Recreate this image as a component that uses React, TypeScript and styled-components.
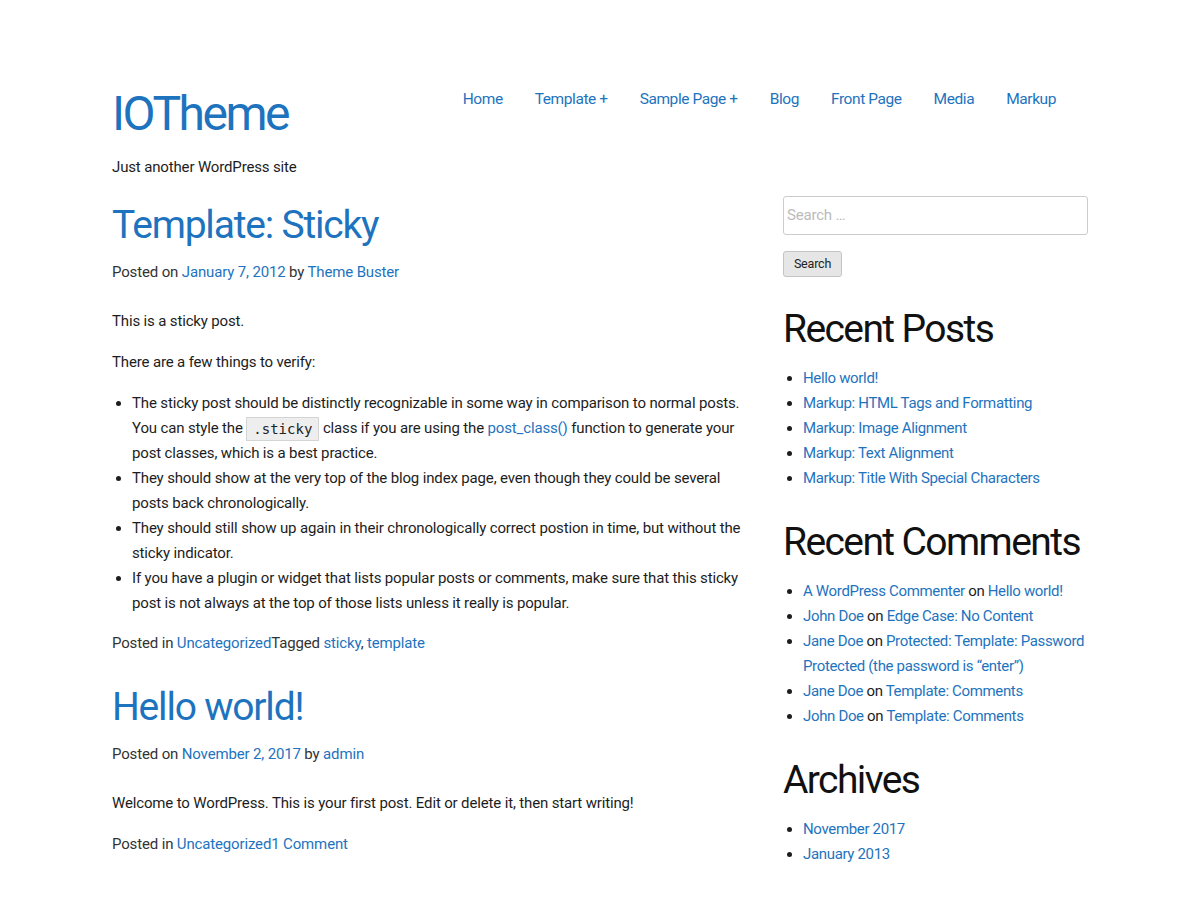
import React from "react";
import styled, { createGlobalStyle } from "styled-components";

const Global = createGlobalStyle`
  html, body { margin: 0; padding: 0; background: #fff; }
  body {
    font-family: Roboto, "Liberation Sans", sans-serif;
    font-size: 15px;
    line-height: 25px;
    letter-spacing: -0.15px;
    color: #1d1d1d;
  }
  a { color: #1e73be; text-decoration: none; }
`;

const Page = styled.div`
  width: 976px;
  margin: 0 auto;
  padding-top: 87px;
`;

const Header = styled.header`
  display: flex;
  justify-content: space-between;
  align-items: flex-start;
`;

const Branding = styled.div`
  display: flex;
  flex-direction: column;
`;

const SiteTitle = styled.a`
  font-size: 48px;
  line-height: 58px;
  letter-spacing: -2.5px;
  margin-top: -2px;
  color: #1e73be;
`;

const Tagline = styled.p`
  margin: 12px 0 0;
  color: #1d1d1d;
`;

const NavList = styled.ul`
  display: flex;
  list-style: none;
  margin: 0;
  padding: 0 16px 0 0;
`;

const NavItem = styled.li`
  padding: 0 16px;
  font-size: 15.5px;
  letter-spacing: -0.42px;
`;

const Content = styled.div`
  display: grid;
  grid-template-columns: 634px 305px;
  column-gap: 37px;
  margin-top: 15.5px;
  align-items: start;
`;

const Main = styled.main`
  display: flex;
  flex-direction: column;
`;

const Article = styled.article`
  margin: 5px 0 22px;
`;

const EntryTitle = styled.h1`
  margin: 0 0 11px;
  font-size: 39px;
  line-height: 48px;
  font-weight: 400;
  letter-spacing: -1.2px;
  a { color: #1e73be; }
`;

const Meta = styled.div`
  color: #333;
`;

const EntryContent = styled.div`
  margin-top: 24px;
  p { margin: 0 0 16px; }
`;

const List = styled.ul`
  margin: 0 0 15px;
  padding-left: 20px;
`;

const Code = styled.code`
  display: inline-block;
  vertical-align: middle;
  line-height: 20px;
  font-family: "DejaVu Sans Mono", "Liberation Mono", monospace;
  font-size: 14px;
  letter-spacing: 0;
  color: #222;
  background: #eee;
  border: 1px solid #d4d4d4;
  padding: 1px 6px;
`;

const Sidebar = styled.aside`
  display: flex;
  flex-direction: column;
`;

const SearchForm = styled.form`
  display: flex;
  flex-direction: column;
  align-items: flex-start;
  gap: 16px;
  margin-bottom: 28px;
`;

const SearchInput = styled.input`
  box-sizing: border-box;
  width: 305px;
  height: 39px;
  border: 1px solid #ccc;
  border-radius: 3px;
  padding: 3px;
  font-family: Roboto, sans-serif;
  font-size: 15px;
  letter-spacing: -0.2px;
  color: #222;
  &::placeholder { color: #bbb; }
`;

const SearchButton = styled.button`
  box-sizing: border-box;
  height: 26px;
  width: 59px;
  padding: 0;
  border: 1px solid #c4c4c4;
  border-radius: 3px;
  background: #e6e6e6;
  font-family: Roboto, sans-serif;
  font-size: 12.5px;
  letter-spacing: -0.2px;
  color: #222;
`;

const Widget = styled.section`
  margin-bottom: 26.5px;
`;

const WidgetTitle = styled.h2`
  margin: 0 0 13.5px;
  font-size: 39px;
  line-height: 48px;
  font-weight: 400;
  letter-spacing: -1.6px;
  color: #111;
`;

const WidgetList = styled.ul`
  margin: 0;
  padding-left: 20px;
  letter-spacing: -0.34px;
`;

const recentPosts = [
  "Hello world!",
  "Markup: HTML Tags and Formatting",
  "Markup: Image Alignment",
  "Markup: Text Alignment",
  "Markup: Title With Special Characters",
];

const comments: [string, string][] = [
  ["A WordPress Commenter", "Hello world!"],
  ["John Doe", "Edge Case: No Content"],
  ["Jane Doe", "Protected: Template: Password Protected (the password is \u201center\u201d)"],
  ["Jane Doe", "Template: Comments"],
  ["John Doe", "Template: Comments"],
];

const nav = ["Home", "Template +", "Sample Page +", "Blog", "Front Page", "Media", "Markup"];

export default function App() {
  return (
    <>
      <Global />
      <Page>
        <Header>
          <Branding>
            <SiteTitle href="#">IOTheme</SiteTitle>
            <Tagline>Just another WordPress site</Tagline>
          </Branding>
          <nav>
            <NavList>
              {nav.map((n) => (
                <NavItem key={n}>
                  <a href="#">{n}</a>
                </NavItem>
              ))}
            </NavList>
          </nav>
        </Header>
        <Content>
          <Main>
            <Article>
              <EntryTitle>
                <a href="#">Template: Sticky</a>
              </EntryTitle>
              <Meta>
                Posted on <a href="#">January 7, 2012</a> by <a href="#">Theme Buster</a>
              </Meta>
              <EntryContent>
                <p>This is a sticky post.</p>
                <p>There are a few things to verify:</p>
                <List>
                  <li>
                    The sticky post should be distinctly recognizable in some way in comparison to normal posts. You can style the <Code>.sticky</Code> class if you are using the <a href="#">post_class()</a> function to generate your post classes, which is a best practice.
                  </li>
                  <li>They should show at the very top of the blog index page, even though they could be several posts back chronologically.</li>
                  <li>They should still show up again in their chronologically correct postion in time, but without the sticky indicator.</li>
                  <li>If you have a plugin or widget that lists popular posts or comments, make sure that this sticky post is not always at the top of those lists unless it really is popular.</li>
                </List>
              </EntryContent>
              <Meta>
                Posted in <a href="#">Uncategorized</a>Tagged <a href="#">sticky</a>, <a href="#">template</a>
              </Meta>
            </Article>
            <Article>
              <EntryTitle>
                <a href="#">Hello world!</a>
              </EntryTitle>
              <Meta>
                Posted on <a href="#">November 2, 2017</a> by <a href="#">admin</a>
              </Meta>
              <EntryContent>
                <p>Welcome to WordPress. This is your first post. Edit or delete it, then start writing!</p>
              </EntryContent>
              <Meta>
                Posted in <a href="#">Uncategorized</a><a href="#">1 Comment</a>
              </Meta>
            </Article>
          </Main>
          <Sidebar>
            <SearchForm onSubmit={(e) => e.preventDefault()}>
              <SearchInput type="search" placeholder="Search …" />
              <SearchButton type="submit">Search</SearchButton>
            </SearchForm>
            <Widget>
              <WidgetTitle>Recent Posts</WidgetTitle>
              <WidgetList>
                {recentPosts.map((p) => (
                  <li key={p}>
                    <a href="#">{p}</a>
                  </li>
                ))}
              </WidgetList>
            </Widget>
            <Widget>
              <WidgetTitle>Recent Comments</WidgetTitle>
              <WidgetList>
                {comments.map(([who, what], i) => (
                  <li key={i}>
                    <a href="#">{who}</a> on <a href="#">{what}</a>
                  </li>
                ))}
              </WidgetList>
            </Widget>
            <Widget>
              <WidgetTitle>Archives</WidgetTitle>
              <WidgetList>
                <li><a href="#">November 2017</a></li>
                <li><a href="#">January 2013</a></li>
              </WidgetList>
            </Widget>
          </Sidebar>
        </Content>
      </Page>
    </>
  );
}
